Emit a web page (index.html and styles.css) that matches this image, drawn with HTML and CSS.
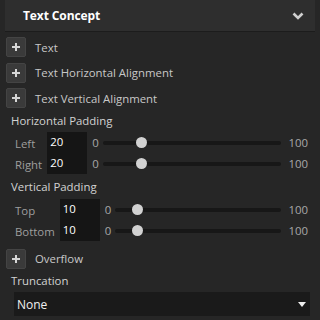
FILE: index.html
```html
<!DOCTYPE html>
<html>
<head>
<meta charset="utf-8">
<link rel="stylesheet" href="styles.css">
</head>
<body>
<div class="panel">
  <div class="header">
    <span class="title">Text Concept</span>
    <svg class="chevron" width="12" height="8" viewBox="0 0 12 8"><path d="M1.5 1.5 L6 6 L10.5 1.5" fill="none" stroke="#cfcfcf" stroke-width="2.6"/></svg>
  </div>
  <div class="props">
    <div class="addrow"><span class="plus"></span><span class="addlabel">Text</span></div>
    <div class="addrow"><span class="plus"></span><span class="addlabel">Text Horizontal Alignment</span></div>
    <div class="addrow"><span class="plus"></span><span class="addlabel">Text Vertical Alignment</span></div>
  </div>
  <div class="section first">Horizontal Padding</div>
  <div class="grid">
    <span class="lbl">Left</span><span class="inp">20</span><span class="num">0</span>
    <div class="track"><span class="thumb" style="left: calc(20% - 2.2px)"></span></div><span class="num">100</span>
    <span class="lbl">Right</span><span class="inp">20</span><span class="num">0</span>
    <div class="track"><span class="thumb" style="left: calc(20% - 2.2px)"></span></div><span class="num">100</span>
  </div>
  <div class="section second">Vertical Padding</div>
  <div class="grid g2">
    <span class="lbl">Top</span><span class="inp">10</span><span class="num">0</span>
    <div class="track"><span class="thumb" style="left: calc(10% + 0.1px)"></span></div><span class="num">100</span>
    <span class="lbl">Bottom</span><span class="inp">10</span><span class="num">0</span>
    <div class="track"><span class="thumb" style="left: calc(10% + 0.1px)"></span></div><span class="num">100</span>
  </div>
  <div class="addrow overflow"><span class="plus"></span><span class="addlabel">Overflow</span></div>
  <div class="section trunc">Truncation</div>
  <div class="select"><span>None</span><span class="tri"></span></div>
</div>
</body>
</html>
```
FILE: styles.css
```css
html, body {
  margin: 0;
  padding: 0;
  background: #262626;
  width: 320px;
  height: 320px;
  overflow: hidden;
}
.panel {
  font-family: "Open Sans", "Noto Sans", sans-serif;
  font-size: 11.4px;
  color: #c6c6c6;
  display: flex;
  flex-direction: column;
}
.header {
  margin: 0 5px;
  height: 31px;
  background: #2e2e2e;
  border-bottom: 1px solid #1c1c1c;
  display: flex;
  align-items: center;
  justify-content: space-between;
  padding: 0 11px 0 18px;
  box-sizing: content-box;
}
.title {
  color: #ffffff;
  font-weight: 700;
  font-size: 12px;
  letter-spacing: -0.1px;
}
.chevron { display: block; }
.props {
  display: flex;
  flex-direction: column;
  gap: 5.5px;
  margin-top: 5px;
}
.addrow {
  display: flex;
  align-items: center;
  gap: 9px;
  padding-left: 6px;
  height: 20px;
}
.plus {
  width: 20px;
  height: 20px;
  box-sizing: border-box;
  background: #3a3a3a;
  border: 1px solid #444444;
  border-radius: 2px;
  position: relative;
  flex: none;
}
.plus::before, .plus::after {
  content: "";
  position: absolute;
  background: #d6d6d6;
  left: 50%;
  top: 50%;
  transform: translate(-50%, -50%);
}
.plus::before { width: 8px; height: 2px; }
.plus::after { width: 2px; height: 8px; }
.addlabel { color: #c8c8c8; }
.section {
  padding-left: 11px;
  color: #d2d2d2;
  height: 16px;
  line-height: 16px;
}
.section.first { margin-top: 5px; }
.section.second { margin-top: 5px; }
.grid {
  display: grid;
  grid-template-columns: max-content 40px max-content 1fr max-content;
  grid-auto-rows: 21px;
  column-gap: 5px;
  align-items: center;
  padding: 0 12px 0 15px;
  margin-top: 3px;
}
.grid.g2 { margin-top: 4px; }
.lbl { color: #9e9e9e; padding-top: 2px; }
.inp {
  background: #151515;
  color: #ffffff;
  height: 21px;
  line-height: 19px;
  padding-left: 3px;
}
.num { color: #a8a8a8; }
.track {
  position: relative;
  height: 4px;
  background: #171717;
  border-radius: 2px;
  margin-left: -1px;
  margin-right: 2px;
}
.thumb {
  position: absolute;
  top: 50%;
  width: 11px;
  height: 11px;
  margin-top: -5.5px;
  border-radius: 50%;
  background: #d2d2d2;
}
.overflow { margin-top: 7px; height: 21px; }
.trunc { margin-top: 4px; }
.select {
  margin: 3px 10px 0 14px;
  height: 24px;
  background: #1a1a1a;
  display: flex;
  align-items: center;
  justify-content: space-between;
  padding: 0 4px 0 3px;
  color: #f0f0f0;
  font-size: 12px;
}
.tri {
  width: 0;
  height: 0;
  border-left: 4.5px solid transparent;
  border-right: 4.5px solid transparent;
  border-top: 5px solid #eeeeee;
}
```
